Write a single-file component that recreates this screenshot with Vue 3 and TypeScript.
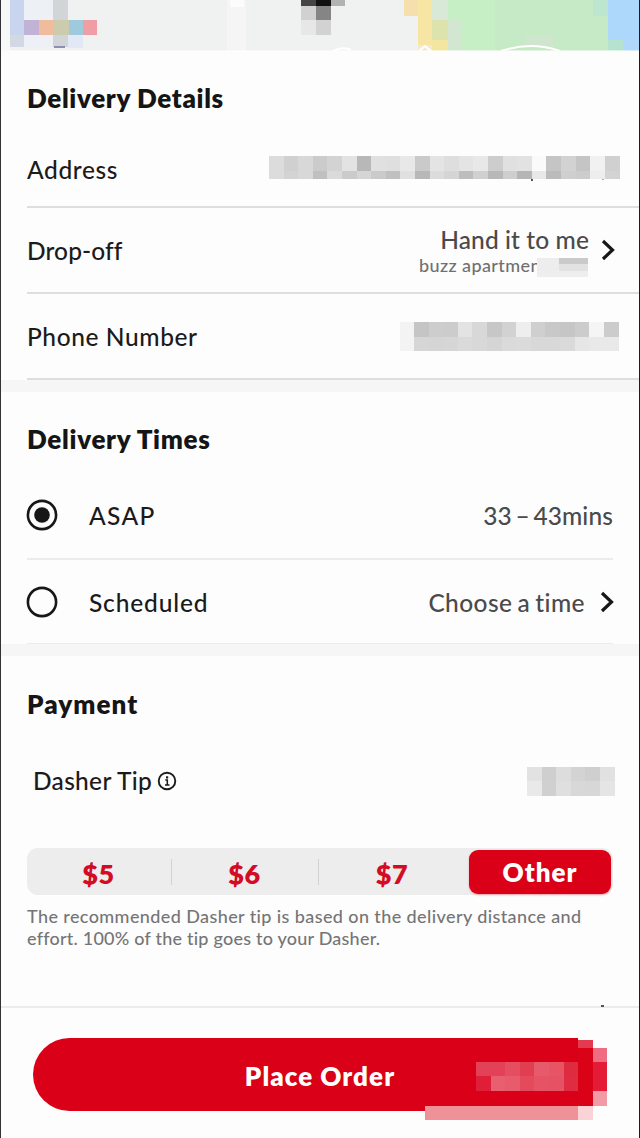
<script setup lang="ts">
type Block = [x: number, y: number, w: number, h: number, fill: string]

const cell = 14.6

function strip(colors: string, y: number, h: number, x = 0): Block[] {
  return colors.split(' ').map((c, i): Block => [x + i * cell, y, cell + 0.1, h, '#' + c.repeat(c.length === 2 ? 3 : 1)])
}

const mapBlocks: Block[] = [
  [0, 0, 638, 51, '#f0f2f2'],
  [0, 0, 9, 51, '#f7f8f8'],
  [23, 0, 30, 48, '#edf0f5'],
  [9, 0, 14, 35, '#c9d5ef'],
  [9, 35, 14, 12, '#d3d9e2'],
  [52, 0, 15, 47, '#d2d5d8'],
  [67, 20, 15, 28, '#e2e9f5'],
  [23, 20, 15, 15, '#c0b3d5'],
  [38, 20, 15, 15, '#f1bc9d'],
  [53, 20, 15, 15, '#cccbae'],
  [68, 20, 14, 15, '#9dcbdc'],
  [82, 20, 14, 15, '#ef9ea6'],
  [53, 46, 11, 2, '#8e8fae'],
  [226, 0, 19, 51, '#f4f5f4'],
  [229, 0, 14, 7, '#fcfcfc'],
  [300, 0, 15, 6, '#454345'],
  [315, 0, 15, 6, '#111111'],
  [330, 0, 14, 6, '#b2b2b2'],
  [300, 6, 15, 14, '#d1d1d1'],
  [315, 6, 15, 14, '#858585'],
  [300, 20, 15, 15, '#e7e7e7'],
  [315, 20, 15, 15, '#d2d2d2'],
  [403, 0, 14, 16, '#f5e0ad'],
  [417, 0, 221, 51, '#c6eac5'],
  [447, 0, 47, 51, '#c6efc5'],
  [417, 0, 14, 45, '#f7e5a4'],
  [417, 45, 14, 6, '#f2ead0'],
  [431, 0, 16, 20, '#d8ead7'],
  [431, 20, 16, 20, '#dce3ad'],
  [431, 40, 16, 11, '#f2e6a0'],
  [447, 20, 14, 31, '#d2e6d2'],
  [524, 35, 29, 12, '#cfe5ce'],
  [592, 0, 15, 16, '#bde5d0'],
  [607, 0, 31, 40, '#add7fb'],
  [607, 40, 15, 11, '#b6e3cf'],
  [622, 40, 16, 11, '#afd8fb'],
]

const addressBlocks: Block[] = [
  ...strip('dc d0 d8 cb d3 e3 b8 e0 df e8 ca e4 de e4 e8 cd e0 e2 fa c5 d2 c5 f1 d0', 0, 15),
  ...strip('dc d3 d8 c0 da cb d5 ca c0 e0 b8 dc d5 bd d0 b8 ce b5 e8 bb cf cc ed d3', 15, 8),
  [262, 23, 2, 2, '#555555'],
  [333, 23, 2, 1, '#aaaaaa'],
]

const noteBlocks: Block[] = [
  [0, 0, 22, 19, '#ededed'],
  [22, 0, 29, 6, '#cacaca'],
  [22, 6, 29, 13, '#e2e2e2'],
  [0, 13, 51, 6, '#eeeeee'],
]

const phoneBlocks: Block[] = [
  [0, 0, 14, 29, '#f3f3f3'],
  ...strip('c5 cd cc e3 d8 c7 d2 ee cf c8 c6 cc f5 cc', 0, 15, 14),
  ...strip('d6 d5 d6 da d8 d5 da db d8 d8 da e6 e9 e9', 15, 14, 14),
]

const tipBlocks: Block[] = [
  ...strip('e2 cf dd d3 cf e1', 0, 14),
  ...strip('e9 d0 df d8 d7 e5', 14, 15),
]

const totalBlocks: Block[] = [
  [545, 0, 30, 74, '#fdfdfd'],
  [545, 2, 15, 8, '#e43a50'],
  [545, 10, 14.7, 58, '#d90217'],
  [559.7, 10, 14.6, 14, '#ee6d80'],
  [559.7, 24, 14.6, 29, '#e31b36'],
  [559.7, 53, 14.6, 15, '#f29ba7'],
  [391.5, 68, 153.5, 14, '#ef9298'],
  [545, 68, 14.7, 14, '#fad3d6'],
  ...strip('e34157 e34157 e54e61 e13e52 e75a6b e75565 df2b40', 24, 14, 443),
  ...strip('df1f37 e85f70 e75b6d e34a5c e65365 e65264 df2c40', 38, 15, 443),
]

const tips = ['$5', '$6', '$7', 'Other']
</script>

<template>
  <main class="screen">
    <svg class="map" width="638" height="51" viewBox="0 0 638 51">
      <g shape-rendering="crispEdges">
        <rect v-for="(b, i) in mapBlocks" :key="i" :x="b[0]" :y="b[1]" :width="b[2]" :height="b[3]" :fill="b[4]" />
      </g>
      <path d="M500 51Q530 41 559 51M418 51l6-5 6 5M332 51q10-5 18-1" fill="none" stroke="#fff" stroke-width="2" />
      <path d="M0 50.8H638" stroke="#fdfdfd" stroke-width="0.8" />
    </svg>

    <section class="details">
      <h2 class="t-details">Delivery Details</h2>
      <div class="row address">
        <span class="t-address">Address</span>
        <svg class="hidden-address" width="351" height="25" viewBox="0 0 351 25" shape-rendering="crispEdges">
          <rect v-for="(b, i) in addressBlocks" :key="i" :x="b[0]" :y="b[1]" :width="b[2]" :height="b[3]" :fill="b[4]" />
        </svg>
      </div>
      <div class="row lower">
        <span class="t-drop">Drop-off</span>
        <div class="value-group">
          <div class="stack">
            <span class="value t-hand">Hand it to me</span>
            <span class="note">
              <span class="note-text">buzz apartmen</span>
              <svg class="note-cover" width="52" height="19" viewBox="0 0 52 19" shape-rendering="crispEdges">
                <rect v-for="(b, i) in noteBlocks" :key="i" :x="b[0]" :y="b[1]" :width="b[2]" :height="b[3]" :fill="b[4]" />
              </svg>
            </span>
          </div>
          <svg class="chevron" width="14" height="22" viewBox="0 0 14 22"><path d="M2 2L11.5 11L2 20" /></svg>
        </div>
      </div>
      <div class="row lower">
        <span class="t-phone">Phone Number</span>
        <svg class="hidden-phone" width="219" height="29" viewBox="0 0 219 29" shape-rendering="crispEdges">
          <rect v-for="(b, i) in phoneBlocks" :key="i" :x="b[0]" :y="b[1]" :width="b[2]" :height="b[3]" :fill="b[4]" />
        </svg>
      </div>
    </section>
    <div class="band"></div>

    <section class="times">
      <h2 class="t-times">Delivery Times</h2>
      <div class="row option asap">
        <svg class="radio" width="32" height="32" viewBox="0 0 32 32">
          <circle cx="16" cy="16" r="14.1" /><circle class="dot" cx="16" cy="16" r="7.8" />
        </svg>
        <span class="t-asap">ASAP</span>
        <span class="value push t-mins">33 – 43mins</span>
      </div>
      <div class="row option">
        <svg class="radio" width="32" height="32" viewBox="0 0 32 32"><circle cx="16" cy="16" r="14.1" /></svg>
        <span class="t-sched">Scheduled</span>
        <span class="value push t-choose">Choose a time</span>
        <svg class="chevron" width="14" height="22" viewBox="0 0 14 22"><path d="M2 2L11.5 11L2 20" /></svg>
      </div>
    </section>
    <div class="band"></div>

    <section class="payment">
      <h2 class="t-pay">Payment</h2>
      <div class="tip-head">
        <span class="t-tip">Dasher Tip</span>
        <svg class="info" width="20" height="20" viewBox="0 0 20 20">
          <circle cx="10" cy="10" r="8.3" />
          <path d="M8.3 9H10.3V14M8 14H12.5" />
          <rect x="9" y="5.3" width="2.2" height="2.2" />
        </svg>
        <svg class="push" width="88" height="29" viewBox="0 0 88 29" shape-rendering="crispEdges">
          <rect v-for="(b, i) in tipBlocks" :key="i" :x="b[0]" :y="b[1]" :width="b[2]" :height="b[3]" :fill="b[4]" />
        </svg>
      </div>
      <div class="segments">
        <button v-for="tip in tips" :key="tip" type="button" :class="{ selected: tip === 'Other' }">{{ tip }}</button>
      </div>
      <p class="hint">
        <span class="t-hint1">The recommended Dasher tip is based on the delivery distance and</span><br />
        <span class="t-hint2">effort. 100% of the tip goes to your Dasher.</span>
      </p>
    </section>

    <footer class="footer">
      <i class="speck"></i>
      <button type="button" class="order">
        <span class="order-text">Place Order</span>
        <svg class="order-cover" width="575" height="83" viewBox="0 0 575 83" shape-rendering="crispEdges">
          <rect v-for="(b, i) in totalBlocks" :key="i" :x="b[0]" :y="b[1]" :width="b[2]" :height="b[3]" :fill="b[4]" />
        </svg>
      </button>
    </footer>
  </main>
</template>

<style>
body { background: #fdfdfd; }
</style>

<style scoped>
.screen {
  box-sizing: border-box;
  width: 640px;
  height: 1138px;
  overflow: hidden;
  display: flex;
  flex-direction: column;
  background: #fdfdfd;
  border-left: 1px solid #333336;
  border-right: 1px solid #1d1d20;
  font-family: Lato, "Liberation Sans", sans-serif;
  font-size: 24.5px;
  font-weight: 500;
  line-height: 30px;
  color: #1b1b1b;
  white-space: nowrap;
}
svg { display: block; flex: none; }
button { font: inherit; border: 0; padding: 0; margin: 0; background: none; }
h2 { margin: 0; font-size: 26px; font-weight: 800; line-height: 32px; color: #151515; }
.map { width: 638px; height: 51px; }

.details { height: 329px; padding-left: 26px; }
.details h2 { padding-top: 31px; }
.row {
  box-sizing: border-box;
  height: 86px;
  display: flex;
  align-items: center;
  justify-content: space-between;
  border-bottom: 2px solid #dedede;
}
.row.address { height: 94px; padding-top: 19px; }
.row.lower { padding-top: 2px; }
.hidden-address { margin: 0 19px 2px 0; }
.hidden-phone { margin: 0 20px 1px 0; }
.value { color: #4a4a4a; }
.value-group { display: flex; align-items: center; gap: 12px; margin-right: 24px; }
.stack { display: flex; flex-direction: column; align-items: flex-end; }
.note { position: relative; width: 169px; height: 22px; font-size: 18px; line-height: 20px; color: #707070; }
.note-text { letter-spacing: 0.4px; margin-left: -1px; }
.note-cover { position: absolute; left: 117px; top: 3px; }
.chevron { margin-bottom: 3px; }
.chevron path { fill: none; stroke: #171717; stroke-width: 3.2; }

.band { flex: none; height: 12px; background: #f6f6f6; }
.times { height: 252px; padding: 0 26px 0 26px; }
.times h2 { padding-top: 31px; }
.option { justify-content: flex-start; border-color: #ececec; }
.option.asap { height: 105px; padding-top: 19px; }
.times .row:last-child { height: 85px; padding-top: 2px; }
.radio { margin: 0 31px 2px -1px; }
.radio circle { fill: none; stroke: #171717; stroke-width: 2.6; }
.radio .dot { fill: #171717; stroke: none; }
.push { margin-left: auto; }
.times .chevron { margin-left: 15px; margin-right: -1px; margin-bottom: 2px; }

.payment { height: 350px; padding: 0 24px 0 26px; }
.payment h2 { padding-top: 32px; }
.tip-head { display: flex; align-items: center; height: 30px; padding: 46px 0 0 6px; }
.info { margin-left: 5px; }
.info circle, .info path { fill: none; stroke: #1b1b1b; stroke-width: 1.9; }
.info path { stroke-width: 1.5; }
.info rect { fill: #1b1b1b; }
.segments {
  display: grid;
  grid-template-columns: 145px 147px 148px 146px;
  box-sizing: border-box;
  width: 586px;
  height: 47px;
  margin-top: 52px;
  border-radius: 11px;
  background: #ededee;
}
.segments button { position: relative; font-size: 27px; font-weight: 800; color: #d40b24; line-height: 47px; letter-spacing: 0.6px; right: 1px; }
.segments button:nth-child(1)::after,
.segments button:nth-child(2)::after {
  content: "";
  position: absolute;
  right: -1px;
  top: 11px;
  width: 1px;
  height: 26px;
  background: #d2d2d4;
}
.segments .selected {
  margin: 2px 2px 4px;
  line-height: 44px;
  border-radius: 9px;
  background: #da0018;
  color: #fff;
  font-size: 26px;
  letter-spacing: 1px;
  right: 0;
  box-shadow: 0 1px 2px #e9a0a8;
}
.hint { margin: 11px 0 0; font-size: 18px; line-height: 21.5px; color: #757575; }

.footer {
  position: relative;
  box-sizing: border-box;
  height: 132px;
  border-top: 2px solid #ececec;
  padding: 30px 0 0 32px;
}
.speck { position: absolute; left: 600px; top: -3px; width: 3px; height: 2px; background: #555; }
.order {
  position: relative;
  display: block;
  width: 574px;
  height: 73px;
  border-radius: 37px 0 0 37px;
  background: linear-gradient(#da0017, #da0017) 0 0 / 545px 100% no-repeat;
  color: #fff;
}
.order-text { display: block; font-size: 26px; font-weight: 800; line-height: 76px; letter-spacing: 1.05px; }
.order-cover { position: absolute; left: 0; top: 0; }

.t-details { letter-spacing: 0.65px; }
.t-address { letter-spacing: 0.6px; }
.t-drop { letter-spacing: 0.1px; }
.t-hand { letter-spacing: 0.1px; }
.t-phone { letter-spacing: 0.6px; }
.t-times { letter-spacing: 0.7px; }
.t-asap { letter-spacing: 1.4px; }
.t-mins { letter-spacing: 0.1px; word-spacing: -2.7px; }
.t-sched { letter-spacing: 0.85px; }
.t-choose { letter-spacing: 0.4px; word-spacing: -1.4px; }
.t-pay { letter-spacing: 1.05px; }
.t-tip { letter-spacing: 0.3px; }
.t-hint1 { letter-spacing: 0.4px; }
.t-hint2 { letter-spacing: 0.22px; }
</style>
